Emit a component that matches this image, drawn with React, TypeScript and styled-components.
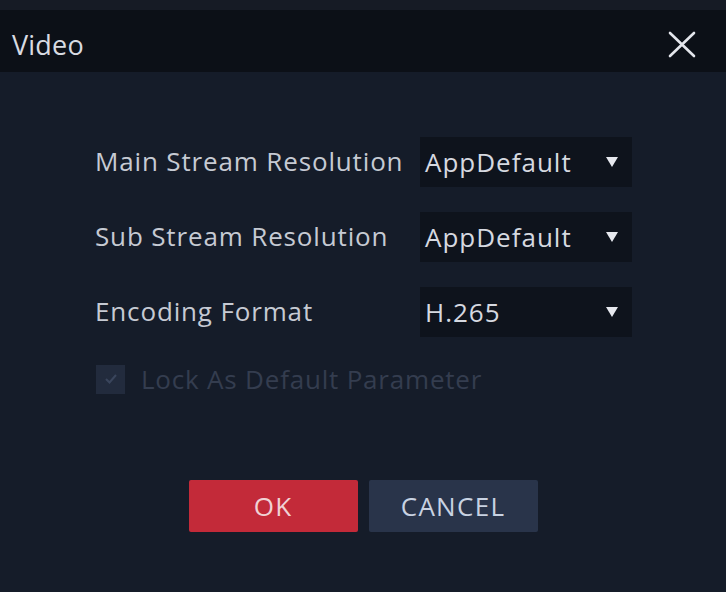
import React from 'react'
import styled, { createGlobalStyle } from 'styled-components'

const GlobalStyle = createGlobalStyle`
  html, body {
    margin: 0;
    padding: 0;
    background: #151c29;
  }
  * {
    box-sizing: border-box;
  }
`

const Window = styled.div`
  width: 726px;
  height: 592px;
  padding-top: 10px;
  background: #161b25;
  font-family: 'Open Sans', 'Noto Sans', sans-serif;
  color: #c9cdd6;
  display: flex;
  flex-direction: column;
  overflow: hidden;
`

const TitleBar = styled.div`
  height: 62px;
  background: #0c1017;
  display: flex;
  align-items: center;
  justify-content: space-between;
  padding: 6px 29px 0 12px;
`

const Title = styled.h1`
  margin: 0;
  font-size: 27px;
  font-weight: 400;
  letter-spacing: 0.2px;
  color: #d8dbe2;
`

const CloseButton = styled.button`
  width: 30px;
  height: 30px;
  padding: 0;
  border: none;
  background: transparent;
  display: flex;
  align-items: center;
  justify-content: center;
  cursor: pointer;
`

const Body = styled.div`
  flex: 1;
  background: #151c29;
  padding: 65px 0 0 95px;
`

const Form = styled.div`
  display: grid;
  grid-template-columns: 325px 212px;
  grid-auto-rows: 50px;
  row-gap: 25px;
  align-items: center;
`

const Label = styled.label`
  font-size: 26px;
  letter-spacing: 0.85px;
  color: #c6cad3;
  transform: translateY(-1px);
`

const Select = styled.div`
  height: 50px;
  background: #0e131c;
  display: flex;
  align-items: center;
  justify-content: space-between;
  padding: 0 14px 0 5px;
  font-size: 26px;
  letter-spacing: 1px;
  color: #d6d9e0;
`

const Arrow = styled.span`
  width: 0;
  height: 0;
  border-left: 6px solid transparent;
  border-right: 6px solid transparent;
  border-top: 10px solid #e6e8ee;
`

const CheckRow = styled.div`
  display: flex;
  align-items: center;
  gap: 16px;
  margin-top: 24px;
`

const CheckBox = styled.span`
  width: 29px;
  height: 29px;
  margin-left: 1px;
  background: #222b3d;
  display: flex;
  align-items: center;
  justify-content: center;
`

const CheckText = styled.span`
  font-size: 26px;
  letter-spacing: 0.8px;
  color: #343d4f;
`

const Actions = styled.div`
  display: flex;
  justify-content: center;
  gap: 11px;
  margin: 83px 0 0 -95px;
`

const Button = styled.button<{ primary?: boolean }>`
  width: 169px;
  height: 52px;
  border: none;
  border-radius: 2px;
  background: ${({ primary }) => (primary ? '#c32a39' : '#29344a')};
  color: ${({ primary }) => (primary ? '#f0d2d4' : '#c8d2e2')};
  font-family: 'Open Sans', 'Noto Sans', sans-serif;
  font-size: 26px;
  letter-spacing: 1.3px;
  cursor: pointer;
`

const rows = [
  { label: 'Main Stream Resolution', value: 'AppDefault' },
  { label: 'Sub Stream Resolution', value: 'AppDefault' },
  { label: 'Encoding Format', value: 'H.265' },
]

export default function App() {
  return (
    <>
      <GlobalStyle />
      <Window>
        <TitleBar>
          <Title>Video</Title>
          <CloseButton aria-label="close">
            <svg width="28" height="27" viewBox="0 0 28 27">
              <path
                d="M2 2 L26 25 M26 2 L2 25"
                stroke="#e4e6ec"
                strokeWidth="2.6"
                strokeLinecap="round"
              />
            </svg>
          </CloseButton>
        </TitleBar>
        <Body>
          <Form>
            {rows.map((row) => (
              <React.Fragment key={row.label}>
                <Label>{row.label}</Label>
                <Select>
                  {row.value}
                  <Arrow />
                </Select>
              </React.Fragment>
            ))}
          </Form>
          <CheckRow>
            <CheckBox>
              <svg width="14" height="12" viewBox="0 0 14 12">
                <path
                  d="M2 6 L5.5 9.5 L12 2"
                  stroke="#3a455c"
                  strokeWidth="2"
                  fill="none"
                />
              </svg>
            </CheckBox>
            <CheckText>Lock As Default Parameter</CheckText>
          </CheckRow>
          <Actions>
            <Button primary>OK</Button>
            <Button>CANCEL</Button>
          </Actions>
        </Body>
      </Window>
    </>
  )
}
